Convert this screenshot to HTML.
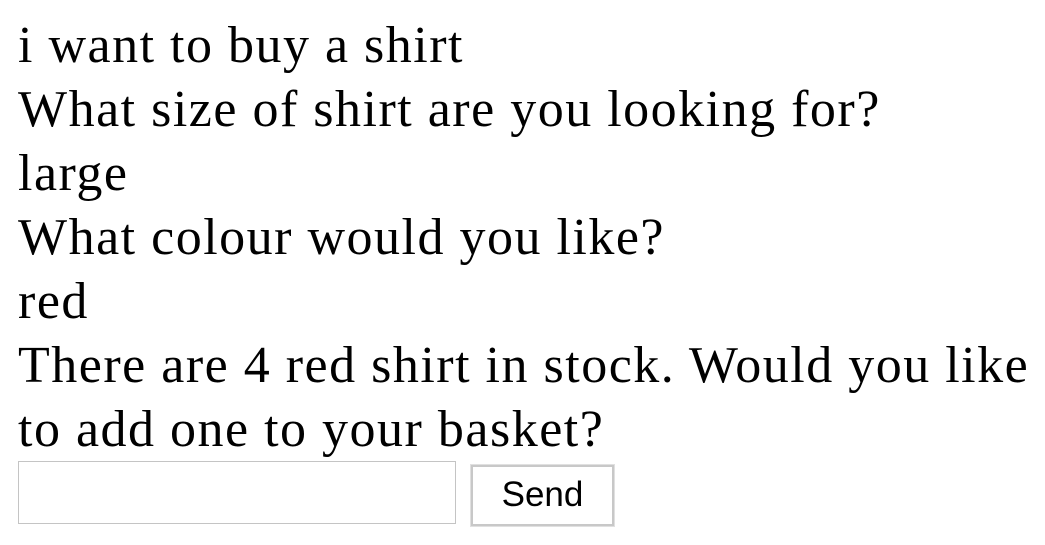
<!DOCTYPE html>
<html><head><style>
html,body{margin:0;padding:0;background:#fff;width:1045px;height:545px;overflow:hidden}
body{font-family:"Liberation Serif",serif;font-size:52px;line-height:64px;letter-spacing:1.5px;color:#000;padding:14px 8px 0 18px;box-sizing:border-box}
.r{display:flex;align-items:flex-start;margin-top:-1px;letter-spacing:0}
.in{width:438px;height:63px;border:1px solid #c4c4c4;box-sizing:border-box}
.b{margin-left:15px;margin-top:4px;width:143px;height:61px;border:2px solid #c8c8c8;outline:1px solid #e0e0e0;box-sizing:border-box;font-family:"Liberation Sans",sans-serif;font-size:35px;line-height:56px;text-align:center;background:#fff}
</style></head><body>
<div>i want to buy a shirt</div>
<div>What size of shirt are you looking for?</div>
<div>large</div>
<div>What colour would you like?</div>
<div>red</div>
<div>There are 4 red shirt in stock. Would you like to add one to your basket?</div>
<div class="r"><div class="in"></div><div class="b">Send</div></div>
</body></html>
